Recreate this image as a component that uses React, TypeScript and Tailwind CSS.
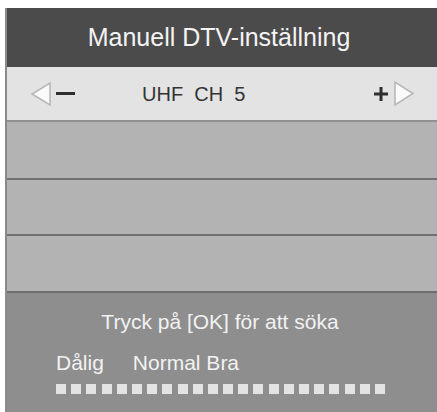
export default function App() {
  const squares = Array.from({ length: 22 });

  return (
    <div className="w-[437px] h-[412px] bg-white pt-[8px] pl-[5px] overflow-hidden font-['Liberation_Sans',Arial,sans-serif]">
      <div className="h-[404px] flex flex-col border-l-2 border-[#8a8a8a]">
        {/* title */}
        <div className="h-[59px] bg-[#4b4b4b] flex items-center justify-center text-[#f4f4f4] text-[25px] pr-[6px]">
          Manuell DTV-inställning
        </div>

        {/* channel selector */}
        <div className="h-[55px] bg-[#e3e3e3] border-b-2 border-[#8f8f8f] flex items-center pl-[23px] pr-[22px]">
          <svg width="22" height="26" viewBox="0 0 22 26">
            <polygon points="20,2 20,24 2,13" fill="#fafafa" stroke="#b5b5b5" strokeWidth="1.5" />
          </svg>
          <div className="ml-[4px] w-[19px] h-[3px] bg-[#2e2e2e]" />
          <div className="ml-[67px] text-[20px] text-[#333] whitespace-pre">UHF  CH  5</div>
          <div className="flex-1" />
          <svg width="14" height="14" viewBox="0 0 14 14">
            <rect x="0" y="5.5" width="14" height="3" fill="#2e2e2e" />
            <rect x="5.5" y="0" width="3" height="14" fill="#2e2e2e" />
          </svg>
          <svg className="ml-[5px]" width="22" height="27" viewBox="0 0 22 27">
            <polygon points="2,2 2,25 20,13.5" fill="#fafafa" stroke="#b5b5b5" strokeWidth="1.5" />
          </svg>
        </div>

        {/* empty rows */}
        <div className="h-[58px] bg-[#b4b3b4] border-b-2 border-[#707070]" />
        <div className="h-[56px] bg-[#b4b3b4] border-b-2 border-[#707070]" />
        <div className="h-[57px] bg-[#b4b3b4] border-b-2 border-[#6e6e6e]" />

        {/* bottom panel */}
        <div className="flex-1 bg-[#8e8e8e] text-[#f2f2f2] text-[21px] leading-[24px] flex flex-col">
          <div className="mt-[17px] text-center pr-[4px]">Tryck på [OK] för att söka</div>
          <div className="mt-[17px] ml-[49px] flex whitespace-pre">
            <span>Dålig</span>
            <span className="ml-[29px]">Normal Bra</span>
          </div>
          <div className="mt-[9px] ml-[49px] flex gap-[5.2px]">
            {squares.map((_, i) => (
              <div key={i} className="w-[10px] h-[10px] bg-[#e3e3e3]" />
            ))}
          </div>
        </div>
      </div>
    </div>
  );
}
